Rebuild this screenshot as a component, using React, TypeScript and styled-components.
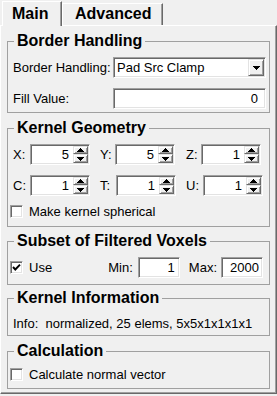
import React from "react";
import styled, { createGlobalStyle, css } from "styled-components";

const Global = createGlobalStyle`
  html, body { margin: 0; padding: 0; background: #f0f0f0; }
  body {
    font-family: "Liberation Sans", Arial, sans-serif;
    font-size: 13px;
    color: #000;
  }
  * { box-sizing: border-box; }
`;

const sunken = css`
  border: 1px solid;
  border-color: #a0a0a0 #ffffff #ffffff #a0a0a0;
  box-shadow: inset 1px 1px 0 #696969, inset -1px -1px 0 #e3e3e3;
`;

const raised = css`
  border: 1px solid;
  border-color: #e3e3e3 #696969 #696969 #e3e3e3;
  box-shadow: inset 1px 1px 0 #ffffff, inset -1px -1px 0 #a0a0a0;
`;

const Window = styled.div`
  width: 277px;
  height: 396px;
  display: flex;
  flex-direction: column;
`;

const TabBar = styled.div`
  height: 25px;
  display: flex;
  align-items: flex-end;
  padding-left: 2px;
  position: relative;
  z-index: 1;
`;

const Tab = styled.div<{ $active?: boolean; $w: number; $pl: number }>`
  width: ${(p) => p.$w}px;
  height: ${(p) => (p.$active ? 25 : 22)}px;
  margin-bottom: ${(p) => (p.$active ? -1 : 0)}px;
  padding-top: ${(p) => (p.$active ? 3 : 1)}px;
  padding-left: ${(p) => p.$pl}px;
  background: #f0f0f0;
  border-left: 1px solid #ffffff;
  border-top: 1px solid #ffffff;
  border-right: 1px solid #696969;
  box-shadow: inset -1px 0 0 #a0a0a0;
  font-weight: bold;
  font-size: 16px;
  line-height: 18px;
  white-space: nowrap;
`;

const Pane = styled.div`
  height: 369px;
  border-top: 1px solid #ffffff;
  border-left: 1px solid #ffffff;
  border-right: 1px solid #696969;
  border-bottom: 1px solid #696969;
  box-shadow: inset -1px -1px 0 #a0a0a0;
  padding: 6px 6px 0 6px;
  display: flex;
  flex-direction: column;
`;

const Group = styled.fieldset<{ $mt: number; $pt: number; $pb: number }>`
  margin: ${(p) => p.$mt}px 0 0 0;
  min-inline-size: 0;
  border: 1px solid #a0a0a0;
  padding: ${(p) => p.$pt}px 3px ${(p) => p.$pb}px 5px;
`;

const Legend = styled.legend`
  font-weight: bold;
  font-size: 16px;
  line-height: 18px;
  padding: 0 3px;
  margin-left: 1px;
`;

const FormGrid = styled.div`
  display: grid;
  grid-template-columns: 100px 1fr;
  row-gap: 10px;
  align-items: center;
`;

const Label = styled.span`
  white-space: nowrap;
  line-height: 15px;
`;

const Combo = styled.div`
  height: 21px;
  ${sunken};
  padding: 1px;
  background: #fff;
  display: flex;
`;

const ComboText = styled.span`
  flex: 1;
  padding-left: 2px;
  line-height: 17px;
`;

const ArrowButton = styled.span<{ $h?: number }>`
  width: ${(p) => (p.$h ? 15 : 16)}px;
  height: ${(p) => (p.$h ? `${p.$h}px` : "auto")};
  ${raised};
  background: #f0f0f0;
  display: flex;
  align-items: center;
  justify-content: center;
`;

const Field = styled.div<{ $w?: number; $pr: number }>`
  ${(p) => (p.$w ? `width: ${p.$w}px; flex: none;` : "")}
  height: 21px;
  ${sunken};
  background: #fff;
  text-align: right;
  padding: 0 ${(p) => p.$pr}px 0 2px;
  line-height: 19px;
`;

const SpinGrid = styled.div`
  display: grid;
  grid-template-columns: repeat(3, auto);
  justify-content: start;
  column-gap: 10px;
  row-gap: 10px;
`;

const SpinField = styled.div`
  display: flex;
  align-items: center;
`;

const SpinLabel = styled.span<{ $w: number }>`
  width: ${(p) => p.$w}px;
  line-height: 15px;
`;

const Spin = styled.div`
  width: 60px;
  height: 21px;
  ${sunken};
  padding: 1px;
  background: #fff;
  display: flex;
`;

const SpinValue = styled.span`
  flex: 1;
  text-align: right;
  padding-right: 4px;
  line-height: 17px;
`;

const SpinButtons = styled.div`
  display: flex;
  flex-direction: column;
`;

const CheckRow = styled.label<{ $mt?: number }>`
  display: flex;
  align-items: center;
  gap: 6px;
  height: 15px;
  margin-left: -3px;
  margin-top: ${(p) => p.$mt ?? 0}px;
  line-height: 15px;
  flex: none;
`;

const CheckBox = styled.span`
  width: 13px;
  height: 13px;
  ${sunken};
  background: #fff;
  display: inline-flex;
  align-items: center;
  justify-content: center;
  flex: none;
`;

const SubsetRow = styled.div`
  display: flex;
  align-items: center;
  height: 21px;
  padding-right: 3px;
`;

const RangeLabel = styled.span<{ $auto?: boolean; $ml: number; $mr: number }>`
  margin-left: ${(p) => (p.$auto ? "auto" : `${p.$ml}px`)};
  margin-right: ${(p) => p.$mr}px;
  line-height: 15px;
  flex: none;
`;

const InfoText = styled.div`
  line-height: 16px;
  white-space: pre;
`;

const UpArrow = () => (
  <svg width="7" height="4" viewBox="0 0 7 4" shapeRendering="crispEdges">
    <path d="M3 0h1v1h1v1h1v1h1v1H0V3h1V2h1V1h1z" fill="#000" />
  </svg>
);

const DownArrow = () => (
  <svg width="7" height="4" viewBox="0 0 7 4" shapeRendering="crispEdges">
    <path d="M0 0h7v1H6v1H5v1H4v1H3V3H2V2H1V1H0z" fill="#000" />
  </svg>
);

const CheckMark = () => (
  <svg width="9" height="9" viewBox="0 0 9 9">
    <polyline points="1,4 3.3,6.5 8,1.6" fill="none" stroke="#000" strokeWidth="1.9" />
  </svg>
);

const Check = ({ checked, label, mt }: { checked?: boolean; label: string; mt?: number }) => (
  <CheckRow $mt={mt}>
    <CheckBox>{checked ? <CheckMark /> : null}</CheckBox>
    <span>{label}</span>
  </CheckRow>
);

const SpinBox = ({ label, value, lw }: { label: string; value: number; lw: number }) => (
  <SpinField>
    <SpinLabel $w={lw}>{label}</SpinLabel>
    <Spin>
      <SpinValue>{value}</SpinValue>
      <SpinButtons>
        <ArrowButton $h={8}>
          <UpArrow />
        </ArrowButton>
        <ArrowButton $h={9}>
          <DownArrow />
        </ArrowButton>
      </SpinButtons>
    </Spin>
  </SpinField>
);

export default function App() {
  return (
    <Window>
      <Global />
      <TabBar>
        <Tab $active $w={60} $pl={9}>
          Main
        </Tab>
        <Tab $w={101} $pl={12}>
          Advanced
        </Tab>
      </TabBar>
      <Pane>
        <Group $mt={0} $pt={7} $pb={3}>
          <Legend>Border Handling</Legend>
          <FormGrid>
            <Label>Border Handling:</Label>
            <Combo>
              <ComboText>Pad Src Clamp</ComboText>
              <ArrowButton>
                <DownArrow />
              </ArrowButton>
            </Combo>
            <Label>Fill Value:</Label>
            <Field $pr={7}>0</Field>
          </FormGrid>
        </Group>

        <Group $mt={6} $pt={7} $pb={7}>
          <Legend>Kernel Geometry</Legend>
          <SpinGrid>
            <SpinBox label="X:" value={5} lw={17} />
            <SpinBox label="Y:" value={5} lw={15} />
            <SpinBox label="Z:" value={1} lw={15} />
            <SpinBox label="C:" value={1} lw={17} />
            <SpinBox label="T:" value={1} lw={16} />
            <SpinBox label="U:" value={1} lw={17} />
          </SpinGrid>
          <Check label="Make kernel spherical" mt={8} />
        </Group>

        <Group $mt={5} $pt={7} $pb={6}>
          <Legend>Subset of Filtered Voxels</Legend>
          <SubsetRow>
            <Check checked label="Use" />
            <RangeLabel $auto $ml={0} $mr={5}>
              Min:
            </RangeLabel>
            <Field $w={42} $pr={4}>
              1
            </Field>
            <RangeLabel $ml={9} $mr={4}>
              Max:
            </RangeLabel>
            <Field $w={42} $pr={3}>
              2000
            </Field>
          </SubsetRow>
        </Group>

        <Group $mt={4} $pt={9} $pb={3}>
          <Legend>Kernel Information</Legend>
          <InfoText>{"Info:  normalized, 25 elems, 5x5x1x1x1x1"}</InfoText>
        </Group>

        <Group $mt={6} $pt={7} $pb={6}>
          <Legend>Calculation</Legend>
          <Check label="Calculate normal vector" />
        </Group>
      </Pane>
    </Window>
  );
}
